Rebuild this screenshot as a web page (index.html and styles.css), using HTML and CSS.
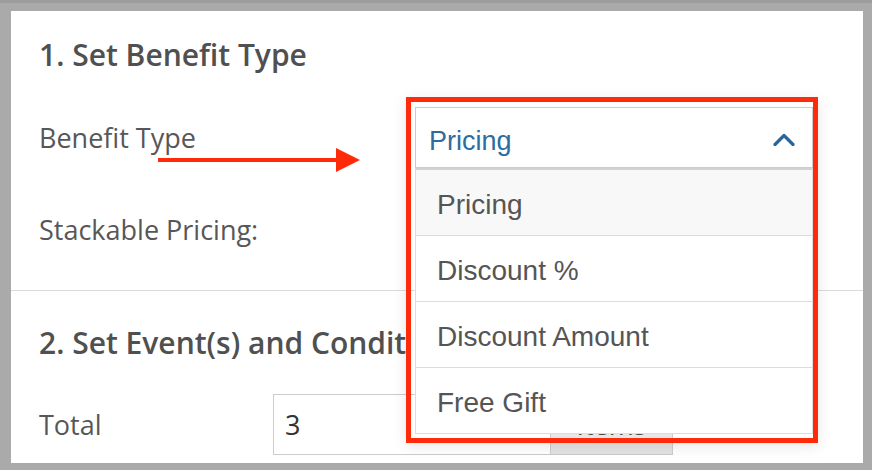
FILE: index.html
```html
<!DOCTYPE html>
<html>
<head>
<meta charset="utf-8">
<link rel="stylesheet" href="styles.css">
</head>
<body>
<div class="frame">
  <div class="panel">
    <section class="section first">
      <h2 class="heading">1. Set Benefit Type</h2>
      <div class="row row-select">
        <div class="label">Benefit Type</div>
        <div class="select-wrap">
          <div class="annotation-box"></div>
          <div class="select-head">
            <span class="select-value">Pricing</span>
            <svg class="chevron" width="22" height="14" viewBox="0 0 22 14"><path d="M2 12.5 L11 3.5 L20 12.5" fill="none" stroke="#2b669a" stroke-width="3.2" stroke-linecap="round" stroke-linejoin="round"/></svg>
          </div>
          <ul class="options">
            <li class="option active">Pricing</li>
            <li class="option">Discount %</li>
            <li class="option">Discount Amount</li>
            <li class="option">Free Gift</li>
          </ul>
        </div>
      </div>
      <div class="row row-plain">
        <div class="label">Stackable Pricing:</div>
      </div>
    </section>
    <section class="section second">
      <h2 class="heading clipped">2. Set Event(s) and Conditions</h2>
      <div class="row row-input">
        <div class="label">Total</div>
        <div class="input">3</div>
        <div class="btn">Items</div>
      </div>
    </section>
    <div class="arrow"><span class="arrow-line"></span><span class="arrow-head"></span></div>
  </div>
</div>
</body>
</html>
```
FILE: styles.css
```css
* { box-sizing: border-box; }
html, body { margin: 0; padding: 0; }
body {
  width: 872px;
  height: 470px;
  overflow: hidden;
  background: #aaaaaa;
  font-family: "Open Sans", "DejaVu Sans", sans-serif;
}
.frame {
  height: 470px;
  padding: 8px 9px 7px 11px;
  border-top: 3px solid #9c9c9c;
}
.panel {
  position: relative;
  background: #ffffff;
  height: 452px;
  overflow: hidden;
}
.section { padding: 0 28px; }
.section.first {
  padding-top: 24px;
  padding-bottom: 40px;
  border-bottom: 1px solid #dadada;
}
.section.second { padding-top: 32px; }
.heading {
  margin: 0;
  font-size: 30px;
  line-height: 40px;
  font-weight: 600;
  color: #505050;
  white-space: nowrap;
}
.heading.clipped {
  max-width: 372px;
  overflow: hidden;
}
.row { display: flex; align-items: center; }
.label {
  font-size: 27px;
  line-height: 36px;
  color: #575757;
}
.row-select { margin-top: 32px; }
.row-select .label { width: 376px; }
.row-plain { margin-top: 42px; height: 40px; }
.select-wrap {
  position: relative;
  width: 398px;
  height: 61px;
}
.annotation-box {
  position: absolute;
  left: -9px;
  top: -10px;
  right: -5px;
  bottom: -275px;
  border: 5px solid #ff2a0a;
  box-shadow: 0 3px 14px rgba(0,0,0,0.10);
  z-index: 3;
  pointer-events: none;
}
.select-head {
  position: relative;
  z-index: 2;
  height: 61px;
  border: 1px solid #cccccc;
  background: #ffffff;
  display: flex;
  align-items: center;
  justify-content: space-between;
  padding: 0 17px 0 13px;
}
.select-value {
  font-family: "Liberation Sans", Arial, sans-serif;
  font-size: 27px;
  color: #2e6c9f;
  padding-top: 7px;
}
.chevron { display: block; margin-top: 2px; }
.options {
  position: absolute;
  z-index: 2;
  left: 0;
  top: 61px;
  width: 398px;
  margin: 0;
  padding: 0;
  list-style: none;
  background: #ffffff;
  border: 1px solid #dcdcdc;
  border-top: 2px solid #d2d2d2;
}
.option {
  height: 66px;
  display: flex;
  align-items: center;
  padding-left: 21px;
  padding-top: 4px;
  font-family: "Liberation Sans", Arial, sans-serif;
  font-size: 28px;
  color: #555555;
  border-bottom: 1px solid #dcdcdc;
}
.option:last-child { border-bottom: none; height: 65px; }
.option.active { background: #f8f8f8; }
.row-input { margin-top: 31px; }
.row-input .label { width: 234px; }
.input {
  width: 278px;
  height: 61px;
  border: 1px solid #cccccc;
  font-size: 27px;
  line-height: 60px;
  padding-left: 11px;
  color: #333333;
}
.btn {
  width: 123px;
  height: 61px;
  margin-left: -1px;
  border: 1px solid #cccccc;
  background: linear-gradient(#eeeeee, #e3e3e3);
  font-size: 27px;
  line-height: 60px;
  text-align: center;
  color: #514943;
}
.arrow {
  position: absolute;
  left: 147px;
  top: 136px;
  width: 202px;
  height: 25px;
  display: flex;
  align-items: center;
}
.arrow-line {
  display: block;
  width: 178px;
  height: 4px;
  background: #ff2a0a;
}
.arrow-head {
  display: block;
  width: 0;
  height: 0;
  border-top: 12.5px solid transparent;
  border-bottom: 12.5px solid transparent;
  border-left: 24px solid #ff2a0a;
}
```
